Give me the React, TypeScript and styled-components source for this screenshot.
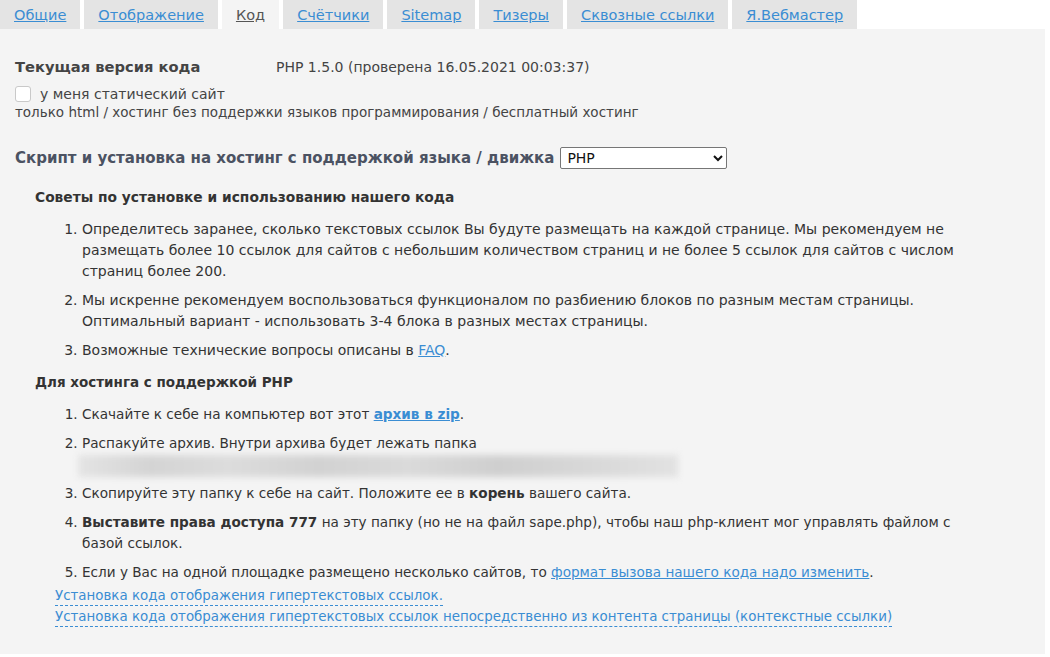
import React, { useState } from 'react';
import styled, { createGlobalStyle } from 'styled-components';

const GlobalStyle = createGlobalStyle`
  html, body {
    margin: 0;
    padding: 0;
    background: #ffffff;
  }
  body {
    font-family: 'DejaVu Sans', Verdana, sans-serif;
    font-size: 14px;
    color: #333333;
  }
`;

const Page = styled.div`
  width: 1045px;
`;

const TabBar = styled.div`
  display: flex;
  gap: 4px;
  height: 29px;
`;

const Tab = styled.a<{ $active?: boolean }>`
  display: flex;
  align-items: center;
  padding: 1px 14px 0;
  height: 29px;
  box-sizing: border-box;
  font-size: 14.5px;
  background: ${({ $active }) => ($active ? '#f4f4f4' : '#e4e4e4')};
  color: ${({ $active }) => ($active ? '#555555' : '#3a8dd3')};
  text-decoration: underline;
  cursor: pointer;
  white-space: nowrap;
`;

const Panel = styled.div`
  background: #f4f4f4;
  min-height: 625px;
  padding: 28px 15px 20px;
  box-sizing: border-box;
`;

const VersionRow = styled.div`
  display: grid;
  grid-template-columns: 261px auto;
  line-height: 20px;
`;

const VersionLabel = styled.div`
  font-size: 14.7px;
  font-weight: bold;
  color: #444444;
`;

const VersionValue = styled.div`
  font-size: 14px;
  color: #444444;
`;

const CheckRow = styled.label`
  display: flex;
  align-items: center;
  gap: 9px;
  margin-top: 8px;
  line-height: 18px;
  font-size: 14px;
  color: #444444;
`;

const Box = styled.input`
  appearance: none;
  width: 16px;
  height: 16px;
  margin: 0;
  border: 1px solid #c9c9c9;
  border-radius: 3px;
  background: #ffffff;
  box-sizing: border-box;
`;

const Hint = styled.div`
  font-size: 13.5px;
  line-height: 18px;
  color: #444444;
`;

const EngineRow = styled.div`
  display: flex;
  align-items: center;
  gap: 6px;
  margin-top: 26px;
`;

const EngineTitle = styled.div`
  font-size: 15px;
  font-weight: bold;
  color: #4b5262;
`;

const EngineSelect = styled.select`
  width: 167px;
  height: 22px;
  font-family: 'DejaVu Sans', Verdana, sans-serif;
  font-size: 14px;
  color: #111111;
  background: #ffffff;
  border: 1px solid #767676;
  border-radius: 2px;
  padding: 0 2px;
`;

const Section = styled.div`
  padding-left: 20px;
`;

const SectionTitle = styled.div<{ $top: number; $size: number }>`
  font-size: ${({ $size }) => $size}px;
  font-weight: bold;
  line-height: 20px;
  color: #333333;
  margin-top: ${({ $top }) => $top}px;
`;

const Steps = styled.ol<{ $size: number }>`
  margin: 12px 0 0;
  padding-left: 47px;
  line-height: 21px;
  font-size: ${({ $size }) => $size}px;
  color: #333333;

  li {
    margin-bottom: 8px;
  }
  li:last-child {
    margin-bottom: 0;
  }
`;

const Link = styled.a<{ $bold?: boolean }>`
  color: #3a8dd3;
  text-decoration: underline;
  font-weight: ${({ $bold }) => ($bold ? 'bold' : 'normal')};
  cursor: pointer;
`;

// hidden folder path, shown smeared out
const Redacted = styled.div`
  width: 600px;
  height: 22px;
  margin: 1px 0 -2px -4px;
  background: linear-gradient(
    90deg,
    #e4e4e4 0%,
    #d4d4d4 12%,
    #dcdcdc 25%,
    #d2d2d2 40%,
    #dadada 55%,
    #cfcfcf 70%,
    #d8d8d8 85%,
    #e2e2e2 100%
  );
  filter: blur(3px);
`;

const Footer = styled.div`
  display: flex;
  flex-direction: column;
  align-items: flex-start;
  gap: 1px;
  margin: 3px 0 0 40px;
  line-height: 19px;
`;

const DottedLink = styled.a`
  color: #3a8dd3;
  font-size: 13.4px;
  text-decoration: none;
  border-bottom: 1px dashed #3a8dd3;
  cursor: pointer;
`;

const tabs = ['Общие', 'Отображение', 'Код', 'Счётчики', 'Sitemap', 'Тизеры', 'Сквозные ссылки', 'Я.Вебмастер'];

export default function App() {
  const [active, setActive] = useState('Код');
  const [engine, setEngine] = useState('PHP');

  return (
    <Page>
      <GlobalStyle />
      <TabBar>
        {tabs.map((t) => (
          <Tab key={t} $active={t === active} onClick={() => setActive(t)}>
            {t}
          </Tab>
        ))}
      </TabBar>
      <Panel>
        <VersionRow>
          <VersionLabel>Текущая версия кода</VersionLabel>
          <VersionValue>PHP 1.5.0 (проверена 16.05.2021 00:03:37)</VersionValue>
        </VersionRow>
        <CheckRow>
          <Box type="checkbox" />
          у меня статический сайт
        </CheckRow>
        <Hint>только html / хостинг без поддержки языков программирования / бесплатный хостинг</Hint>

        <EngineRow>
          <EngineTitle>Скрипт и установка на хостинг с поддержкой языка / движка</EngineTitle>
          <EngineSelect value={engine} onChange={(e) => setEngine(e.target.value)}>
            <option value="PHP">PHP</option>
            <option value="Perl">Perl</option>
            <option value="ASP.NET">ASP.NET</option>
          </EngineSelect>
        </EngineRow>

        <Section>
          <SectionTitle $top={18} $size={13.8}>
            Советы по установке и использованию нашего кода
          </SectionTitle>
          <Steps $size={14}>
            <li>
              Определитесь заранее, сколько текстовых ссылок Вы будуте размещать на каждой странице. Мы рекомендуем не
              <br />
              размещать более 10 ссылок для сайтов с небольшим количеством страниц и не более 5 ссылок для сайтов с числом
              <br />
              страниц более 200.
            </li>
            <li>
              Мы искренне рекомендуем воспользоваться функционалом по разбиению блоков по разным местам страницы.
              <br />
              Оптимальный вариант - использовать 3-4 блока в разных местах страницы.
            </li>
            <li>
              Возможные технические вопросы описаны в <Link>FAQ</Link>.
            </li>
          </Steps>

          <SectionTitle $top={11} $size={13.5}>
            Для хостинга с поддержкой PHP
          </SectionTitle>
          <Steps $size={13.6}>
            <li>
              Скачайте к себе на компьютер вот этот <Link $bold>архив в zip</Link>.
            </li>
            <li>
              Распакуйте архив. Внутри архива будет лежать папка
              <Redacted />
            </li>
            <li>
              Скопируйте эту папку к себе на сайт. Положите ее в <b>корень</b> вашего сайта.
            </li>
            <li>
              <b>Выставите права доступа 777</b> на эту папку (но не на файл sape.php), чтобы наш php-клиент мог управлять
              файлом с
              <br />
              базой ссылок.
            </li>
            <li>
              Если у Вас на одной площадке размещено несколько сайтов, то <Link>формат вызова нашего кода надо изменить</Link>.
            </li>
          </Steps>
        </Section>

        <Footer>
          <DottedLink>Установка кода отображения гипертекстовых ссылок.</DottedLink>
          <DottedLink>
            Установка кода отображения гипертекстовых ссылок непосредственно из контента страницы (контекстные ссылки)
          </DottedLink>
        </Footer>
      </Panel>
    </Page>
  );
}
